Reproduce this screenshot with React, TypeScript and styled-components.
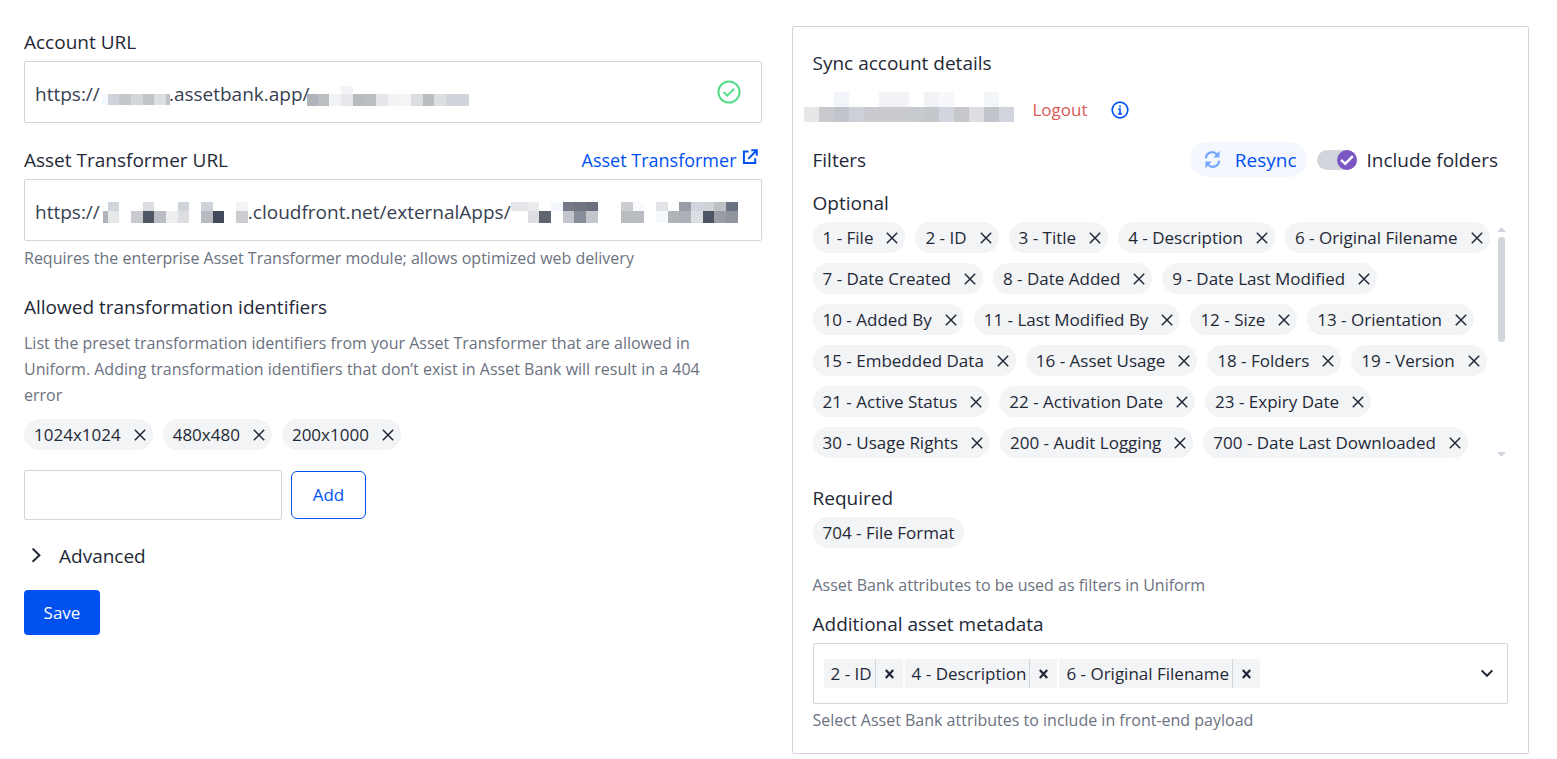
import React, { useState } from "react";
import styled, { createGlobalStyle } from "styled-components";

const color = {
  text: "#1f2937",
  value: "#374151",
  muted: "#6b7280",
  line: "#d1d5dc",
  chip: "#f3f4f6",
  primary: "#0051f0",
  danger: "#dc5858",
  success: "#57dc8a",
  accent: "#7b57c5",
};

const GlobalStyle = createGlobalStyle`
  *, *::before, *::after { box-sizing: border-box; }
  body {
    margin: 0;
    background: #fff;
    color: ${color.text};
    font-family: "Open Sans", "Noto Sans", sans-serif;
    font-size: 19px;
    line-height: 32px;
  }
  button, input { font: inherit; color: inherit; }
  button { cursor: pointer; }
`;

const Page = styled.main`
  display: grid;
  grid-template-columns: minmax(0, 1fr) minmax(0, 1fr);
  gap: 30px;
  align-items: start;
  padding: 26px 28px 4px 24px;
`;

const Form = styled.form`
  display: flex;
  flex-direction: column;
`;

const Card = styled.section`
  display: flex;
  flex-direction: column;
  padding: 20px;
  border: 1px solid ${color.line};
  border-radius: 2px;
`;

const Group = styled.div<{ $top?: number }>`
  display: flex;
  flex-direction: column;
  align-items: stretch;
  margin-top: ${(p) => p.$top ?? 0}px;
`;

const LabelRow = styled.div`
  display: flex;
  justify-content: space-between;
  padding-right: 4px;
  margin-bottom: 3px;
`;

const Label = styled.label`
  font-size: 19px;
  line-height: 32px;
`;

const Title = styled.h2`
  margin: 0;
  font-size: 19px;
  font-weight: 400;
  line-height: 32px;
`;

const Subtitle = styled(Title).attrs({ as: "h3" })`
  margin-bottom: 3px;
`;

const Help = styled.p<{ $top?: number }>`
  margin: ${(p) => p.$top ?? 4}px 0 0;
  padding-right: 30px;
  font-size: 16px;
  line-height: 26px;
  color: ${color.muted};
`;

const ExternalLink = styled.a`
  display: flex;
  gap: 5px;
  font-size: 18px;
  color: ${color.primary};
  text-decoration: none;
  svg { margin-top: 5px; }
`;

const Field = styled.div`
  position: relative;
  display: flex;
  align-items: center;
  height: 62px;
  padding-right: 20px;
  border: 1px solid ${color.line};
  border-radius: 2px;
`;

const FieldInput = styled.input`
  flex: 1;
  min-width: 0;
  height: 60px;
  padding: 3px 10px 0;
  border: 0;
  outline: 0;
  background: transparent;
  color: ${color.value};
`;

const Redaction = styled.svg`
  position: absolute;
  top: 0;
  left: 0;
  pointer-events: none;
`;

const Chips = styled.ul`
  display: flex;
  flex-wrap: wrap;
  align-content: flex-start;
  gap: 10px;
  margin: 0;
  padding: 0;
  list-style: none;
`;

const ChipItem = styled.li`
  display: flex;
  align-items: center;
  gap: 13px;
  height: 31px;
  padding: 0 7px 0 10px;
  border-radius: 16px;
  background: ${color.chip};
  font-size: 17px;
  white-space: nowrap;
  > span:last-child { margin-right: 3px; }
`;

const IconButton = styled.button`
  display: flex;
  align-items: center;
  justify-content: center;
  padding: 0;
  border: 0;
  background: none;
`;

const AddRow = styled.div`
  display: flex;
  align-items: center;
  gap: 9px;
  margin-top: 20px;
`;

const AddInput = styled.input`
  width: 258px;
  height: 50px;
  padding: 0 10px;
  border: 1px solid ${color.line};
  border-radius: 2px;
`;

const AddButton = styled.button`
  width: 75px;
  height: 48px;
  padding: 0;
  border: 1px solid ${color.primary};
  border-radius: 6px;
  background: #fff;
  color: ${color.primary};
  font-size: 17px;
`;

const Disclosure = styled.button`
  display: flex;
  align-items: center;
  align-self: flex-start;
  gap: 17px;
  margin-top: 20px;
  padding: 0 0 0 7px;
  border: 0;
  background: none;
`;

const SaveButton = styled.button`
  align-self: flex-start;
  width: 76px;
  height: 45px;
  margin-top: 18px;
  padding: 0;
  border: 0;
  border-radius: 4px;
  background: ${color.primary};
  color: #fff;
  font-size: 17px;
`;

const AccountRow = styled.div`
  display: flex;
  align-items: center;
  height: 36px;
  margin: 13px 0 14px -9px;
`;

const UserName = styled.svg`
  align-self: flex-start;
`;

const Logout = styled.button`
  margin: 0 23px 0 19px;
  padding: 0;
  border: 0;
  background: none;
  color: ${color.danger};
  font-size: 17px;
`;

const FilterBar = styled.div`
  display: flex;
  align-items: center;
  justify-content: space-between;
  margin-bottom: 10px;
`;

const FilterActions = styled.div`
  display: flex;
  align-items: center;
  gap: 10px;
  padding-right: 10px;
`;

const Resync = styled.button`
  display: flex;
  align-items: center;
  gap: 14px;
  height: 35px;
  padding: 0 10px 0 14px;
  border: 0;
  border-radius: 18px;
  background: #f4f8fe;
  color: ${color.primary};
`;

const SwitchLabel = styled.label`
  display: flex;
  align-items: center;
  gap: 10px;
`;

const Switch = styled.span`
  position: relative;
  display: flex;
  width: 40px;
  height: 20px;
  input {
    appearance: none;
    width: 40px;
    height: 20px;
    margin: 0;
    border-radius: 10px;
    background: ${color.line};
  }
  svg {
    position: absolute;
    top: 0;
    left: 0;
    pointer-events: none;
  }
  input:checked + svg { left: 20px; }
`;

const ScrollArea = styled.div`
  display: flex;
  justify-content: space-between;
  margin-bottom: 24px;
`;

const ScrollBar = styled.div`
  display: flex;
  flex: none;
  flex-direction: column;
  align-items: center;
  justify-content: space-between;
  width: 13px;
  padding: 5px 0 1px;
`;

const ScrollTrack = styled.div`
  flex: 1;
  width: 7px;
  margin: 5px 0;
`;

const ScrollThumb = styled.div`
  height: 50%;
  border-radius: 4px;
  background: ${color.line};
`;

const TagField = styled(Field)`
  gap: 2px;
  height: 61px;
  padding: 0 13px 0 10px;
`;

const Tag = styled.span`
  display: flex;
  align-items: center;
  height: 29px;
  padding-left: 7px;
  border-radius: 2px;
  background: ${color.chip};
  font-size: 17px;
  white-space: nowrap;
`;

const TagRemove = styled(IconButton)`
  width: 28px;
  height: 29px;
  margin-left: 3px;
  border-left: 1px solid ${color.line};
`;

const CloseIcon = () => (
  <svg width="12" height="12" viewBox="0 0 12 12" fill="none" stroke={color.text} strokeWidth="1.5">
    <path d="M.8.8 11.2 11.2M11.2.8.8 11.2" />
  </svg>
);

const TagCloseIcon = () => (
  <svg width="9" height="10" viewBox="0 0 9 10" fill="none" stroke={color.text} strokeWidth="2.2">
    <path d="M.8 1 8.2 9M8.2 1 .8 9" />
  </svg>
);

const CheckCircleIcon = () => (
  <svg width="24" height="24" viewBox="0 0 24 24" fill="none" stroke={color.success} strokeWidth="2">
    <circle cx="12" cy="12" r="10.6" />
    <path d="m6.6 12 3.6 3.6 7-6.8" />
  </svg>
);

const ExternalIcon = () => (
  <svg width="16" height="16" viewBox="0 0 16 16" fill="none" stroke={color.primary} strokeWidth="2">
    <path d="M6.500 2.500H1.900V14h11.300V9.300M9.300 1.300H14.800V6.800M14.600 1.500 6.200 9.900" />
  </svg>
);

const InfoIcon = () => (
  <svg width="18" height="18" viewBox="0 0 18 18" fill="none" stroke={color.primary}>
    <circle cx="9" cy="9" r="7.8" strokeWidth="1.7" />
    <path d="M9 4.4v1.8M7.4 8.1H9v4.600M7.2 12.900h3.600" strokeWidth="1.6" />
  </svg>
);

const SyncIcon = () => (
  <svg width="17" height="19" viewBox="0 0 17 19" fill="none" stroke="#78a8fb" strokeWidth="2.2">
    <path d="M1.9 8.4a6.4 6.4 0 0 1 11.2-4M15.1 10.6a6.4 6.4 0 0 1-11.2 4" />
    <path d="M15.6.8v6.6H9.2zM1.4 18.2v-6.6h6.4z" fill="#78a8fb" stroke="none" />
  </svg>
);

const KnobIcon = () => (
  <svg width="20" height="20" viewBox="0 0 20 20" fill="none">
    <circle cx="10" cy="10" r="10" fill={color.accent} />
    <path d="m4 9.8 4.2 4 7.6-7.6" stroke="#fff" strokeWidth="2.5" />
  </svg>
);

const ChevronRight = () => (
  <svg width="11" height="16" viewBox="0 0 11 16" fill="none" stroke={color.text} strokeWidth="2">
    <path d="m1.6.6 6.8 6.6-6.8 6.6" />
  </svg>
);

const ChevronDown = () => (
  <svg width="14" height="10" viewBox="0 0 14 10" fill="none" stroke={color.text} strokeWidth="2">
    <path d="m1.6 1.4 5.400 5.400L12.400 1.400" />
  </svg>
);

const ScrollArrow = ({ down = false }: { down?: boolean }) => (
  <svg width="9" height="5" viewBox="0 0 9 5" fill={color.line}>
    <path d={down ? "M0 0h9L4.500 5z" : "M0 5h9L4.500 0z"} />
  </svg>
);

/* A cell is x, y, width, height, colour. */
type Cell = [number, number, number, number, string];

const Mosaic = ({ cells }: { cells: Cell[] }) => (
  <>
    {cells.map(([x, y, w, h, fill]) => (
      <rect key={`${x}-${y}`} x={x} y={y} width={w} height={h} fill={fill} shapeRendering="crispEdges" />
    ))}
  </>
);

const row = (y: number, h: number, parts: [number, number, string][]): Cell[] =>
  parts.map(([from, to, fill]) => [from - 25, y, to - from, h, fill]);

const accountCells: Cell[] = [
  ...row(32, 11, [
    [102, 108, "#f4f8fc"], [108, 119, "#d0d4da"], [119, 131, "#c4c7cb"], [131, 143, "#d4d6d9"],
    [143, 154, "#c0c4c9"], [154, 166, "#dcdee2"], [166, 170, "#c0c3c8"],
  ]),
  ...row(24, 8, [[341, 353, "#f3f4f7"]]),
  ...row(32, 12, [
    [307, 318, "#b0b3b9"], [318, 329, "#bbbec3"], [329, 341, "#f1f2f5"], [341, 353, "#e6e8ec"],
    [353, 364, "#b7babf"], [364, 376, "#babdc2"], [376, 388, "#e6e7ea"], [388, 400, "#f1f3f4"],
    [400, 411, "#f3f4f5"], [411, 423, "#dcdde1"], [423, 434, "#b9bcc1"], [434, 446, "#dddee2"],
    [446, 469, "#d0d3d9"],
  ]),
];

const transformerCells: Cell[] = [
  ...row(22, 9, [
    [108, 119, "#d1d5dc"], [143, 154, "#dcdde1"], [178, 189, "#cfd3da"], [201, 213, "#cfd3da"],
    [236, 248, "#f2f3f5"], [511, 528, "#e4e5e8"], [528, 539, "#e9ebed"], [551, 563, "#f4f7fc"],
    [563, 574, "#757a86"], [574, 586, "#717682"], [586, 598, "#6a6f7c"], [621, 633, "#cccdd1"],
    [633, 644, "#f8f9fc"], [656, 668, "#e2e4e7"], [679, 691, "#999da6"], [691, 703, "#d1d4dc"],
    [703, 714, "#cfd2d7"], [714, 726, "#bdc0c5"], [726, 738, "#6b7280"],
  ]),
  ...row(31, 12, [
    [103, 108, "#b0b3bb"], [108, 119, "#e6e8ea"], [131, 143, "#c9cbd0"], [143, 154, "#4e5764"],
    [154, 166, "#babdc4"], [166, 178, "#eceef0"], [178, 189, "#dddee2"], [201, 213, "#b8bbc1"],
    [213, 224, "#424b59"], [236, 248, "#cbcdd1"], [528, 539, "#dddee2"],
    [539, 551, "#5e6470"], [563, 574, "#c3c6cc"], [574, 586, "#888e99"], [586, 598, "#c3c6cb"],
    [621, 644, "#b9bcc1"], [656, 668, "#f5f8fd"], [668, 679, "#b0b3b8"], [679, 691, "#acb0b8"],
    [691, 703, "#dcdde1"], [703, 714, "#4b5563"], [714, 726, "#999da6"], [726, 738, "#90949d"],
  ]),
];

const userCells: Cell[] = [
  ...([[2, "#f1f4f8"], [5, "#f2f3f7"], [6, "#f2f3f7"], [8, "#f1f3f7"], [9, "#f6f8fb"], [12, "#f3f6f9"]] as [number, string][])
    .map(([i, fill]): Cell => [i * 15, 0, 15, 15, fill]),
  ...["#e5e7e9", "#c8cace", "#c1c4ca", "#cdd0d7", "#c9cbd0", "#c9cbd0", "#c9cbcf", "#c7cacf", "#c4c7cb",
    "#d1d5de", "#c6c8cc", "#dcdee2", "#c1c4ca", "#d1d4dd"]
    .map((fill, i): Cell => [i * 15, 15, 15, 15, fill]),
];

const nbsp = (count: number) => "\u00a0".repeat(count);

const identifiers = ["1024x1024", "480x480", "200x1000"];

const filters = [
  "1 - File", "2 - ID", "3 - Title", "4 - Description", "6 - Original Filename",
  "7 - Date Created", "8 - Date Added", "9 - Date Last Modified",
  "10 - Added By", "11 - Last Modified By", "12 - Size", "13 - Orientation",
  "15 - Embedded Data", "16 - Asset Usage", "18 - Folders", "19 - Version",
  "21 - Active Status", "22 - Activation Date", "23 - Expiry Date",
  "30 - Usage Rights", "200 - Audit Logging", "700 - Date Last Downloaded",
];

const metadata = ["2 - ID", "4 - Description", "6 - Original Filename"];

const Chip = ({ text, onRemove }: { text: string; onRemove?: () => void }) => (
  <ChipItem>
    <span>{text}</span>
    {onRemove && (
      <IconButton type="button" aria-label={`Remove ${text}`} onClick={onRemove}>
        <CloseIcon />
      </IconButton>
    )}
  </ChipItem>
);

function useList(initial: string[]) {
  const [items, setItems] = useState(initial);
  const add = (item: string) => item && setItems([...items, item]);
  const remove = (item: string) => setItems(items.filter((other) => other !== item));
  return { items, add, remove };
}

export default function App() {
  const ids = useList(identifiers);
  const optional = useList(filters);
  const meta = useList(metadata);
  const [draft, setDraft] = useState("");

  return (
    <>
      <GlobalStyle />
      <Page>
        <Form onSubmit={(e) => e.preventDefault()}>
          <Group>
            <LabelRow>
              <Label htmlFor="account">Account URL</Label>
            </LabelRow>
            <Field>
              <FieldInput id="account" defaultValue={`https://${nbsp(14)}.assetbank.app/`} />
              <Redaction width="460" height="60" aria-hidden="true">
                <Mosaic cells={accountCells} />
              </Redaction>
              <CheckCircleIcon />
            </Field>
          </Group>

          <Group $top={21}>
            <LabelRow>
              <Label htmlFor="transformer">Asset Transformer URL</Label>
              <ExternalLink href="#transformer">
                Asset Transformer
                <ExternalIcon />
              </ExternalLink>
            </LabelRow>
            <Field>
              <FieldInput id="transformer" defaultValue={`https://${nbsp(30)}.cloudfront.net/externalApps/`} />
              <Redaction width="716" height="60" aria-hidden="true">
                <Mosaic cells={transformerCells} />
              </Redaction>
            </Field>
            <Help>Requires the enterprise Asset Transformer module; allows optimized web delivery</Help>
          </Group>

          <Group $top={20}>
            <Label htmlFor="identifier">Allowed transformation identifiers</Label>
            <Help $top={7}>
              List the preset transformation identifiers from your Asset Transformer that are allowed in Uniform.
              Adding transformation identifiers that don’t exist in Asset Bank will result in a 404 error
            </Help>
          </Group>
          <Group $top={11}>
            <Chips>
              {ids.items.map((text) => (
                <Chip key={text} text={text} onRemove={() => ids.remove(text)} />
              ))}
            </Chips>
            <AddRow>
              <AddInput id="identifier" value={draft} onChange={(e) => setDraft(e.target.value)} />
              <AddButton type="button" onClick={() => { ids.add(draft); setDraft(""); }}>Add</AddButton>
            </AddRow>
          </Group>

          <Disclosure type="button" aria-expanded="false">
            <ChevronRight />
            Advanced
          </Disclosure>
          <SaveButton type="submit">Save</SaveButton>
        </Form>

        <Card>
          <Title>Sync account details</Title>
          <AccountRow>
            <UserName width="210" height="30" aria-hidden="true">
              <Mosaic cells={userCells} />
            </UserName>
            <Logout type="button">Logout</Logout>
            <IconButton type="button" aria-label="Account information">
              <InfoIcon />
            </IconButton>
          </AccountRow>

          <FilterBar>
            <Title>Filters</Title>
            <FilterActions>
              <Resync type="button">
                <SyncIcon />
                Resync
              </Resync>
              <SwitchLabel>
                <Switch>
                  <input type="checkbox" role="switch" defaultChecked />
                  <KnobIcon />
                </Switch>
                Include folders
              </SwitchLabel>
            </FilterActions>
          </FilterBar>

          <Subtitle>Optional</Subtitle>
          <ScrollArea>
            <Chips>
              {optional.items.map((text) => (
                <Chip key={text} text={text} onRemove={() => optional.remove(text)} />
              ))}
            </Chips>
            <ScrollBar aria-hidden="true">
              <ScrollArrow />
              <ScrollTrack>
                <ScrollThumb />
              </ScrollTrack>
              <ScrollArrow down />
            </ScrollBar>
          </ScrollArea>

          <Subtitle>Required</Subtitle>
          <Chips>
            <Chip text="704 - File Format" />
          </Chips>
          <Help $top={24}>Asset Bank attributes to be used as filters in Uniform</Help>

          <Group $top={10}>
            <LabelRow>
              <Label htmlFor="metadata">Additional asset metadata</Label>
            </LabelRow>
            <TagField>
              {meta.items.map((text) => (
                <Tag key={text}>
                  {text}
                  <TagRemove type="button" aria-label={`Remove ${text}`} onClick={() => meta.remove(text)}>
                    <TagCloseIcon />
                  </TagRemove>
                </Tag>
              ))}
              <FieldInput id="metadata" role="combobox" aria-expanded="false" />
              <IconButton type="button" aria-label="Show options">
                <ChevronDown />
              </IconButton>
            </TagField>
            <Help $top={3}>Select Asset Bank attributes to include in front-end payload</Help>
          </Group>
        </Card>
      </Page>
    </>
  );
}
